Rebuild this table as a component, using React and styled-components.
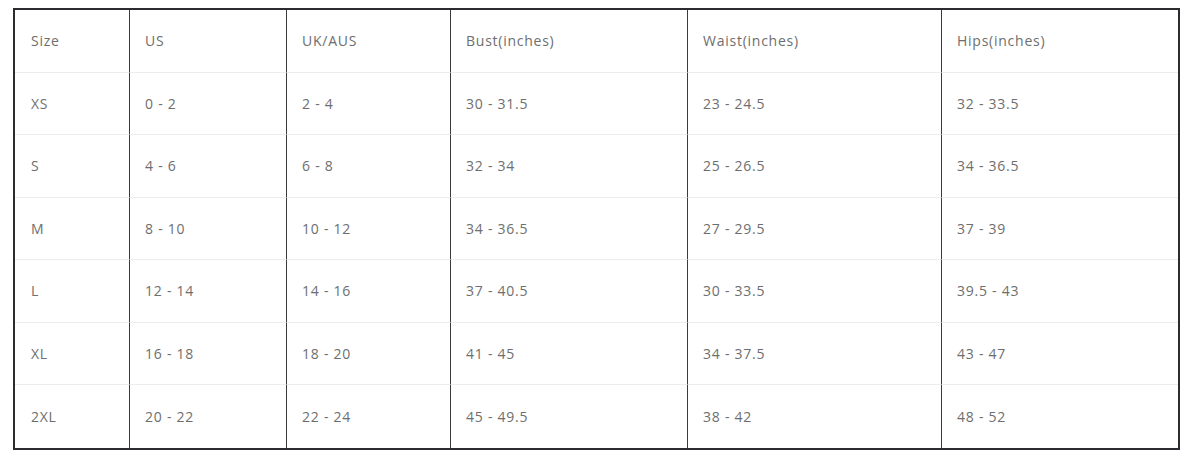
import React from "react";
import styled, { createGlobalStyle } from "styled-components";

const Global = createGlobalStyle`
  html, body { margin: 0; padding: 0; background: #fff; }
  body { font-family: "Open Sans", "Noto Sans", sans-serif; }
`;

const Page = styled.div`
  padding: 8px 20px 0 13px;
`;

const Table = styled.div`
  width: 1167px;
  box-sizing: border-box;
  border: 2px solid #2b2b30;
  display: grid;
  grid-template-columns: 114px 157px 164px 237px 254px 1fr;
`;

const Cell = styled.div`
  height: 62.5px;
  box-sizing: border-box;
  display: flex;
  align-items: center;
  padding-left: ${(p) => (p.$first ? "16px" : "15px")};
  border-left: ${(p) => (p.$first ? "none" : "1px solid #3a3a3f")};
  border-bottom: ${(p) => (p.$last ? "none" : "1px solid #ededed")};
  font-size: 14px;
  color: #6e6e6e;
  letter-spacing: 0.75px;
  white-space: nowrap;
`;

const header = ["Size", "US", "UK/AUS", "Bust(inches)", "Waist(inches)", "Hips(inches)"];
const rows = [
  ["XS", "0 - 2", "2 - 4", "30 - 31.5", "23 - 24.5", "32 - 33.5"],
  ["S", "4 - 6", "6 - 8", "32 - 34", "25 - 26.5", "34 - 36.5"],
  ["M", "8 - 10", "10 - 12", "34 - 36.5", "27 - 29.5", "37 - 39"],
  ["L", "12 - 14", "14 - 16", "37 - 40.5", "30 - 33.5", "39.5 - 43"],
  ["XL", "16 - 18", "18 - 20", "41 - 45", "34 - 37.5", "43 - 47"],
  ["2XL", "20 - 22", "22 - 24", "45 - 49.5", "38 - 42", "48 - 52"],
];

export default function App() {
  const all = [header, ...rows];
  return (
    <Page>
      <Global />
      <Table>
        {all.map((r, ri) =>
          r.map((c, ci) => (
            <Cell key={ri + "-" + ci} $first={ci === 0} $last={ri === all.length - 1}>
              {c}
            </Cell>
          ))
        )}
      </Table>
    </Page>
  );
}
